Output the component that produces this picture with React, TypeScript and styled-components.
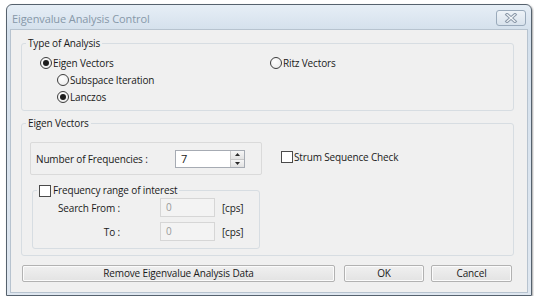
import { createGlobalStyle } from 'styled-components';
import styled from 'styled-components';

const GlobalStyle = createGlobalStyle`
	html, body {
		margin: 0;
		padding: 0;
		background: #ffffff;
	}
	body {
		font-family: 'Open Sans', 'Noto Sans', sans-serif;
		font-size: 10px;
		letter-spacing: -0.15px;
		color: #1a1a1a;
	}
`;

const Window = styled.div`
	margin: 4px 0 0 6px;
	width: 526px;
	height: 292px;
	box-sizing: border-box;
	border: 1px solid #56626e;
	border-radius: 6px 6px 0 0;
	background: linear-gradient(to bottom, #e6eef6 0px, #d4e0ec 26px, #dfe7f0 100%);
	display: flex;
	flex-direction: column;
	box-shadow: 1px 1px 2px rgba(0, 0, 0, 0.35);
`;

const TitleBar = styled.div`
	height: 24px;
	display: flex;
	justify-content: space-between;
	align-items: flex-start;
	padding: 0 5px 0 5px;
`;

const Title = styled.span`
	margin-top: 6px;
	font-size: 11px;
	letter-spacing: -0.1px;
	line-height: 15px;
	color: #8798a9;
`;

const CloseButton = styled.button`
	margin-top: 5px;
	width: 30px;
	height: 16px;
	padding: 0;
	border: 1px solid #9aaabb;
	border-radius: 3px;
	background: linear-gradient(to bottom, #eef3f8, #d8e2ec);
	display: flex;
	align-items: center;
	justify-content: center;
`;

const Content = styled.div`
	flex: 1;
	margin: 0 3px 2px 3px;
	border: 1px solid #b7c3cf;
	background: #f0f0f0;
	padding: 6px 13px 0 10px;
	display: flex;
	flex-direction: column;
`;

const Group = styled.fieldset`
	margin: 0;
	min-width: 0;
	padding: 0;
	border: 1px solid #d7dde2;
	border-radius: 3px;
	& + & {
		margin-top: 5px;
	}
`;

const SubGroup = styled(Group)`
	margin: 8px 2px 0 2px;
`;

const GroupBody = styled.div<{ $pad: string }>`
	padding: ${(p) => p.$pad};
`;

const Legend = styled.legend`
	margin-left: 4px;
	padding: 0 2px;
	line-height: 15px;
	display: flex;
	align-items: center;
	gap: 2px;
`;

const OptionRow = styled.div<{ $indent?: number }>`
	height: 17px;
	display: flex;
	align-items: center;
	padding-left: ${(p) => p.$indent ?? 0}px;
`;

const OptionCell = styled.label<{ $width?: number }>`
	display: flex;
	align-items: center;
	gap: 1px;
	width: ${(p) => (p.$width ? `${p.$width}px` : 'auto')};
`;

const RadioMark = styled.span<{ $on?: boolean }>`
	width: 12px;
	height: 12px;
	box-sizing: border-box;
	border-radius: 50%;
	border: 1px solid #3c3c3c;
	background: radial-gradient(circle at 40% 35%, #ffffff, #e8e8e8);
	display: inline-flex;
	align-items: center;
	justify-content: center;
	&::after {
		content: '';
		width: 6px;
		height: 6px;
		border-radius: 50%;
		background: #1c1c1c;
		display: ${(p) => (p.$on ? 'block' : 'none')};
	}
`;

const CheckMark = styled.span`
	width: 12px;
	height: 12px;
	box-sizing: border-box;
	border: 1px solid #4a4a4a;
	background: #ffffff;
	display: inline-block;
`;

const EigenBody = styled.div`
	display: flex;
	align-items: flex-start;
`;

const LeftColumn = styled.div`
	width: 232px;
	display: flex;
	flex-direction: column;
`;

const FreqPanel = styled.div`
	height: 33px;
	box-sizing: border-box;
	border: 1px solid #dadada;
	border-radius: 2px;
	display: flex;
	align-items: center;
	padding-left: 5px;
`;

const FieldLabel = styled.span<{ $width: number; $align?: string }>`
	flex: 0 0 ${(p) => p.$width}px;
	text-align: ${(p) => p.$align ?? 'left'};
`;

const SpinBox = styled.div`
	width: 70px;
	height: 18px;
	box-sizing: border-box;
	border: 1px solid #a6abb3;
	background: #ffffff;
	display: flex;
	margin-top: 1px;
`;

const SpinValue = styled.span`
	flex: 1;
	padding-left: 5px;
	line-height: 16px;
	font-size: 11px;
`;

const SpinButtons = styled.div`
	width: 13px;
	display: flex;
	flex-direction: column;
	border-left: 1px solid #c8c8c8;
`;

const SpinButton = styled.span`
	flex: 1;
	background: linear-gradient(to bottom, #f6f6f6, #e2e2e2);
	display: flex;
	align-items: center;
	justify-content: center;
	& + & {
		border-top: 1px solid #c8c8c8;
	}
`;

const RightColumn = styled.div`
	padding: 8px 0 0 19px;
`;

const RangeGrid = styled.div`
	display: grid;
	grid-template-columns: 87px 95px auto;
	grid-auto-rows: 19px;
	row-gap: 5px;
	align-items: center;
`;

const DisabledInput = styled.span`
	justify-self: end;
	width: 55px;
	height: 19px;
	box-sizing: border-box;
	border: 1px solid #d6d6d6;
	background: #f3f3f3;
	color: #9a9a9a;
	padding-left: 5px;
	line-height: 17px;
`;

const Unit = styled.span`
	margin-left: 7px;
`;

const ButtonRow = styled.div`
	display: flex;
	padding-left: 1px;
	margin-top: 9px;
	gap: 7px;
`;

const PushButton = styled.button<{ $width: number; $gapBefore?: number }>`
	width: ${(p) => p.$width}px;
	height: 17px;
	margin-left: ${(p) => p.$gapBefore ?? 0}px;
	padding: 0;
	border: 1px solid #b2b2b2;
	border-radius: 2px;
	background: linear-gradient(to bottom, #f0f0f0, #e3e3e3);
	box-shadow: inset 0 0 0 1px #fbfbfb;
	font-family: inherit;
	font-size: 10px;
	letter-spacing: -0.15px;
	color: #1a1a1a;
	line-height: 15px;
`;

function Radio({ on, label, width }: { on?: boolean; label: string; width?: number }) {
	return (
		<OptionCell $width={width}>
			<RadioMark $on={on} />
			{label}
		</OptionCell>
	);
}

export default function App() {
	return (
		<>
			<GlobalStyle />
			<Window>
				<TitleBar>
					<Title>Eigenvalue Analysis Control</Title>
					<CloseButton aria-label='Close'>
						<svg width='14' height='10' viewBox='0 0 14 10'>
							<path d='M3 1.5 L11 8.5 M11 1.5 L3 8.5' stroke='#8a98a8' strokeWidth='3.2' strokeLinecap='square' />
							<path d='M3 1.5 L11 8.5 M11 1.5 L3 8.5' stroke='#f4f7fa' strokeWidth='1.2' strokeLinecap='square' />
						</svg>
					</CloseButton>
				</TitleBar>
				<Content>
					<Group>
						<Legend>Type of Analysis</Legend>
						<GroupBody $pad='3px 0 5px 18px'>
							<OptionRow>
								<Radio on label='Eigen Vectors' width={230} />
								<Radio label='Ritz Vectors' />
							</OptionRow>
							<OptionRow $indent={17}>
								<Radio label='Subspace Iteration' />
							</OptionRow>
							<OptionRow $indent={17}>
								<Radio on label='Lanczos' />
							</OptionRow>
						</GroupBody>
					</Group>
					<Group>
						<Legend>Eigen Vectors</Legend>
						<GroupBody $pad='11px 0 6px 8px'>
							<EigenBody>
								<LeftColumn>
									<FreqPanel>
										<FieldLabel $width={139}>Number of Frequencies :</FieldLabel>
										<SpinBox>
											<SpinValue>7</SpinValue>
											<SpinButtons>
												<SpinButton>
													<svg width='5' height='3' viewBox='0 0 5 3'>
														<path d='M0 3 L2.5 0 L5 3 Z' fill='#2a2a2a' />
													</svg>
												</SpinButton>
												<SpinButton>
													<svg width='5' height='3' viewBox='0 0 5 3'>
														<path d='M0 0 L2.5 3 L5 0 Z' fill='#2a2a2a' />
													</svg>
												</SpinButton>
											</SpinButtons>
										</SpinBox>
									</FreqPanel>
									<SubGroup>
										<Legend>
											<CheckMark />
											Frequency range of interest
										</Legend>
										<GroupBody $pad='0 0 7px 0'>
											<RangeGrid>
												<FieldLabel $width={87} $align='right'>Search From :</FieldLabel>
												<DisabledInput>0</DisabledInput>
												<Unit>[cps]</Unit>
												<FieldLabel $width={87} $align='right'>To :</FieldLabel>
												<DisabledInput>0</DisabledInput>
												<Unit>[cps]</Unit>
											</RangeGrid>
										</GroupBody>
									</SubGroup>
								</LeftColumn>
								<RightColumn>
									<OptionCell>
										<CheckMark />
										Strum Sequence Check
									</OptionCell>
								</RightColumn>
							</EigenBody>
						</GroupBody>
					</Group>
					<ButtonRow>
						<PushButton $width={313}>Remove Eigenvalue Analysis Data</PushButton>
						<PushButton $width={80} $gapBefore={2}>OK</PushButton>
						<PushButton $width={81}>Cancel</PushButton>
					</ButtonRow>
				</Content>
			</Window>
		</>
	);
}
